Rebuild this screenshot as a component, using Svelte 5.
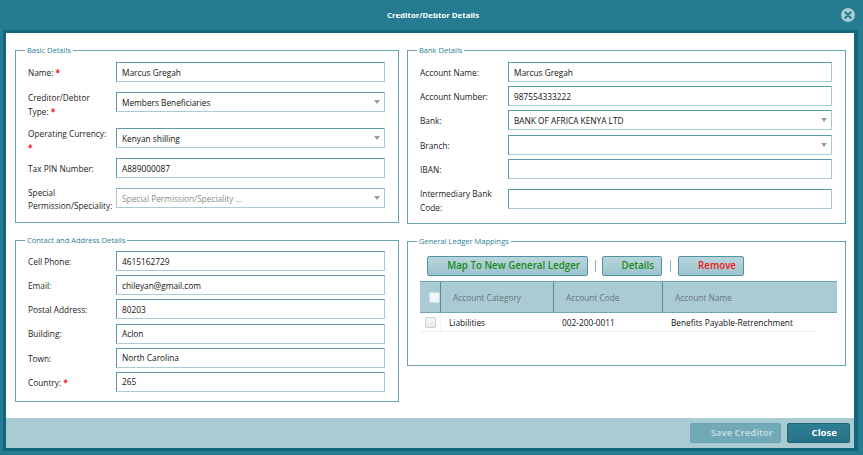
<script>
  const basic = [
    { label: 'Name:', req: true, value: 'Marcus Gregah' },
    { label: 'Creditor/Debtor Type:', req: true, value: 'Members Beneficiaries', select: true },
    { label: 'Operating Currency:', req: true, value: 'Kenyan shilling', select: true },
    { label: 'Tax PIN Number:', value: 'A889000087' },
    { label: 'Special Permission/Speciality:', value: 'Special Permission/Speciality ...', select: true, muted: true }
  ];
  const contact = [
    { label: 'Cell Phone:', value: '4615162729' },
    { label: 'Email:', value: 'chileyan@gmail.com' },
    { label: 'Postal Address:', value: '80203' },
    { label: 'Building:', value: 'Aclon' },
    { label: 'Town:', value: 'North Carolina' },
    { label: 'Country:', req: true, value: '265' }
  ];
  const bank = [
    { label: 'Account Name:', value: 'Marcus Gregah' },
    { label: 'Account Number:', value: '987554333222' },
    { label: 'Bank:', value: 'BANK OF AFRICA KENYA LTD', select: true },
    { label: 'Branch:', value: '', select: true },
    { label: 'IBAN:', value: '' },
    { label: 'Intermediary Bank Code:', value: '' }
  ];
</script>

{#snippet field(f)}
  <div class="row">
    <div class="label">{f.label}{#if f.req}{' '}<span class="req">*</span>{/if}</div>
    <div class="control" class:muted={f.muted}>
      <span class="value">{f.value}</span>
      {#if f.select}<span class="caret"></span>{/if}
    </div>
  </div>
{/snippet}

<div class="dialog">
  <header class="title">
    <span>Creditor/Debtor Details</span>
    <svg class="x" viewBox="0 0 14 14" width="14" height="14" aria-hidden="true">
      <circle cx="7" cy="7" r="7" fill="#a9cdd6" />
      <path d="M4.3 4.3l5.4 5.4M9.7 4.3l-5.4 5.4" stroke="#267b90" stroke-width="2" stroke-linecap="round" />
    </svg>
  </header>

  <div class="frame">
    <main class="body">
      <div class="col left">
        <fieldset class="basic">
          <legend>Basic Details</legend>
          <div class="rows">
            {#each basic as f}{@render field(f)}{/each}
          </div>
        </fieldset>
        <fieldset class="contact">
          <legend>Contact and Address Details</legend>
          <div class="rows tight">
            {#each contact as f}{@render field(f)}{/each}
          </div>
        </fieldset>
      </div>

      <div class="col right">
        <fieldset class="bank">
          <legend>Bank Details</legend>
          <div class="rows tight">
            {#each bank as f}{@render field(f)}{/each}
          </div>
        </fieldset>
        <fieldset class="ledger">
          <legend>General Ledger Mappings</legend>
          <div class="toolbar">
            <button class="tool green map">Map To New General Ledger</button>
            <i class="sep"></i>
            <button class="tool green details">Details</button>
            <i class="sep wide"></i>
            <button class="tool red remove">Remove</button>
          </div>
          <div class="thead">
            <div class="c0"><span class="check head"></span></div>
            <div class="c1">Account Category</div>
            <div class="c2">Account Code</div>
            <div class="c3">Account Name</div>
          </div>
          <div class="tr">
            <div class="c0"><span class="check"></span></div>
            <div class="c1">Liabilities</div>
            <div class="c2">002-200-0011</div>
            <div class="c3">Benefits Payable-Retrenchment</div>
          </div>
        </fieldset>
      </div>
    </main>

    <footer class="foot">
      <button class="action save">Save Creditor</button>
      <button class="action close">Close</button>
    </footer>
  </div>
</div>

<style>
  :global(body) {
    margin: 0;
    background: #267b90;
    overflow: hidden;
  }
  .dialog {
    width: 863px;
    height: 455px;
    background: #267b90;
    font-family: "Open Sans", "Noto Sans", sans-serif;
    font-size: 8.3px;
    color: #111;
    display: flex;
    flex-direction: column;
    overflow: hidden;
  }
  .title {
    height: 30px;
    flex: none;
    display: flex;
    align-items: center;
    justify-content: center;
    color: #fff;
    font-weight: 700;
    font-size: 7.85px;
    position: relative;
    padding-left: 3px;
    box-sizing: border-box;
  }
  .x {
    position: absolute;
    left: 841px;
    top: 8px;
  }
  .frame {
    margin: 0 5px 0 3px;
    height: 421px;
    box-sizing: border-box;
    border: solid #0f667e;
    border-width: 3px 4px 3px 3px;
    background: #fff;
    display: flex;
    flex-direction: column;
    flex: none;
  }
  .body {
    flex: 1;
    display: flex;
    gap: 8px;
    padding: 12px 8px 0 9px;
    min-height: 0;
  }
  .col {
    display: flex;
    flex-direction: column;
  }
  .left { width: 384px; gap: 12px; }
  .right { width: 439px; gap: 12px; }

  fieldset {
    margin: 0;
    padding: 0;
    border: 1px solid #6ba3b2;
    box-sizing: border-box;
    position: relative;
    min-width: 0;
  }
  legend {
    margin-left: 9px;
    padding: 0 2px;
    color: #2d7f95;
    font-size: 7.5px;
    line-height: 10px;
  }
  .basic { height: 178px; }
  .contact { height: 167px; }
  .bank { height: 179px; }
  .ledger { height: 130px; }

  .rows {
    padding: 7px 13px 0 12px;
    display: flex;
    flex-direction: column;
  }
  .rows.tight { gap: 4.2px; padding-top: 6px; }
  .bank .rows { padding-top: 7px; gap: 4px; }

  .row {
    display: flex;
    align-items: center;
  }
  .label {
    width: 88px;
    flex: none;
    box-sizing: border-box;
    padding-top: 1px;
    line-height: 13.5px;
    color: #1a1a1a;
  }
  .req { color: #f01818; font-weight: 700; }
  .control {
    flex: 1;
    height: 20px;
    box-sizing: border-box;
    border: 1px solid #5d9bab;
    border-bottom-color: #a9cbd3;
    border-right-color: #a9cbd3;
    display: flex;
    align-items: center;
    padding: 0 5px;
    position: relative;
    background: #fff;
    color: #111;
  }
  .control.muted { color: #8a8a8a; border-color: #a9cbd3; border-top-color: #7fb0bd; }
  .caret {
    position: absolute;
    right: 4px;
    top: 7px;
    border: 3.5px solid transparent;
    border-top: 4px solid #9a9a9a;
    border-bottom: 0;
  }
  .basic .row:nth-child(1) { margin-bottom: 10px; }
  .basic .row:nth-child(2),
  .basic .row:nth-child(3) {
    align-items: flex-start;
    height: 28px;
  }
  .basic .row:nth-child(2) { margin-bottom: 8px; }
  .basic .row:nth-child(3) { margin-bottom: 2px; }
  .basic .row:nth-child(2) .label { margin-top: -2px; padding-right: 14px; }
  .basic .row:nth-child(3) .label { margin-top: -2px; padding-right: 6px; }
  .basic .row:nth-child(4) { margin-bottom: 7.5px; }
  .basic .row:nth-child(5) {
    align-items: flex-start;
    height: 28px;
  }
  .basic .row:nth-child(5) .label { margin-top: -1px; }
  .basic .row:nth-child(5) .control { margin-top: 2.5px; }

  .bank .row:nth-child(4) { margin-top: 1px; }
  .bank .row:nth-child(6) {
    align-items: flex-start;
    margin-top: 4px;
  }
  .bank .row:nth-child(6) .label { margin-top: -1px; }
  .bank .row:nth-child(6) .control { margin-top: 2px; }

  .toolbar {
    display: flex;
    align-items: center;
    margin: 10px 0 0 19px;
    height: 20px;
  }
  .tool {
    height: 20px;
    box-sizing: border-box;
    border: 1px solid #4f93a5;
    border-radius: 2px;
    background: linear-gradient(#b9d5dc, #9dc3cd);
    font-family: inherit;
    font-size: 9.75px;
    font-weight: 600;
    text-align: right;
    padding: 0 7px 0 0;
    margin: 0;
    line-height: 18px;
  }
  .green { color: #1a8a1a; }
  .red { color: #f01515; }
  .map { width: 161px; }
  .details { width: 60px; }
  .remove { width: 66px; }
  .sep {
    width: 1px;
    height: 12px;
    background: #8fb9c4;
    margin: 0 6.5px;
  }
  .sep.wide { margin: 0 7.5px; }

  .thead, .tr {
    display: flex;
    margin-left: 12px;
  }
  .thead {
    width: 417px;
    height: 32px;
    margin-top: 5px;
    background: #abcbd4;
    border-top: 1px solid #6fa7b5;
    border-bottom: 1px solid #6fa7b5;
    box-sizing: border-box;
    color: #66777c;
    align-items: stretch;
  }
  .thead > div {
    display: flex;
    align-items: center;
    border-right: 1px solid #4f8ea0;
    box-sizing: border-box;
  }
  .thead .c3 { border-right: 0; padding-left: 12px; }
  .thead .c1, .thead .c2 { padding-left: 12px; }
  .c0 { width: 21px; flex: none; box-sizing: border-box; }
  .c1 { width: 113px; flex: none; box-sizing: border-box; }
  .c2 { width: 109px; flex: none; box-sizing: border-box; }
  .thead .c0 { padding-left: 9px; }
  .tr {
    width: 396px;
    height: 19px;
    border-bottom: 1px solid #edf1f2;
    align-items: center;
    color: #111;
    box-sizing: border-box;
  }
  .tr .c0 {
    padding-left: 5px;
    border-right: 1px solid #f0f3f4;
    height: 100%;
    display: flex;
    align-items: center;
  }
  .tr .c1, .tr .c2, .tr .c3 { padding-left: 8px; }
  .tr .c3 { white-space: nowrap; }
  .check {
    width: 11px;
    height: 11px;
    display: block;
    flex: none;
    box-sizing: border-box;
    border: 1px solid #c9d2d4;
    border-radius: 2px;
    background: linear-gradient(#f7f7f7, #ececec);
  }
  .check.head { background: #f3f5f6; border-color: #cfdde0; }

  .foot {
    height: 30px;
    flex: none;
    background: #abcbd3;
    display: flex;
    align-items: center;
    justify-content: flex-end;
    gap: 6px;
    padding-right: 4px;
  }
  .action {
    height: 20px;
    margin: 0;
    box-sizing: border-box;
    border-radius: 2px;
    font-family: inherit;
    font-weight: 700;
    text-align: right;
    line-height: 18px;
  }
  .save {
    width: 91px;
    padding: 0 7px 0 0;
    background: #72a9b7;
    border: 1px solid #6ba3b2;
    color: #bcd7de;
    font-size: 9.3px;
  }
  .close {
    width: 63px;
    padding: 0 12px 0 0;
    background: linear-gradient(#2f7f94, #267388);
    border: 1px solid #1f6175;
    color: #fff;
    font-size: 9.6px;
  }
</style>
